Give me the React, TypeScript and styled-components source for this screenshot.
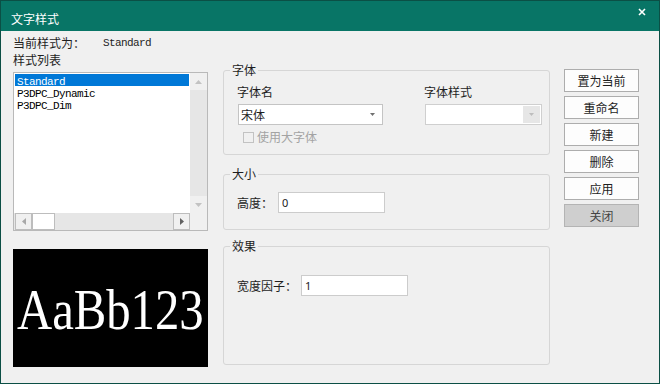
import React from "react";
import styled, { createGlobalStyle } from "styled-components";

const GlobalStyle = createGlobalStyle`
  html, body {
    margin: 0;
    padding: 0;
    background: #f0f0f0;
  }
  body {
    font-family: "Noto Sans CJK SC", "Noto Sans", sans-serif;
    font-size: 12px;
    color: #1e1e1e;
  }
  * { box-sizing: border-box; }
`;

const Window = styled.div`
  width: 660px;
  height: 384px;
  border: 1px solid #0b4f45;
  display: flex;
  flex-direction: column;
  background: #f0f0f0;
`;

const TitleBar = styled.div`
  height: 30px;
  flex: none;
  background: #087566;
  display: flex;
  justify-content: space-between;
  align-items: flex-start;
  padding: 0 13px 0 10px;
`;

const TitleText = styled.span`
  color: #fff;
  line-height: 12px;
  margin-top: 12px;
`;

const CloseIcon = styled.svg`
  margin-top: 7px;
`;

const Body = styled.div`
  flex: 1;
  display: flex;
  align-items: flex-start;
  padding-left: 12px;
`;

const LeftColumn = styled.div`
  width: 195px;
  padding-top: 6px;
  display: flex;
  flex-direction: column;
`;

const Line = styled.div<{ $gap?: number }>`
  display: flex;
  line-height: 12px;
  height: 12px;
  margin-top: ${(p) => p.$gap ?? 0}px;
`;

const InfoLabel = styled.span`
  width: 90px;
`;

const Mono = styled.span`
  font-family: "Liberation Mono", "DejaVu Sans Mono", monospace;
  font-size: 11px;
  letter-spacing: -0.6px;
`;

const ListBox = styled.div`
  margin-top: 6px;
  height: 159px;
  border: 1px solid #b9b9b9;
  background: #fff;
  display: grid;
  grid-template-columns: 1fr 17px;
  grid-template-rows: 1fr 17px;
`;

const ListArea = styled.div`
  padding: 1px;
`;

const ListItem = styled.div<{ $selected?: boolean }>`
  height: 12px;
  line-height: 12px;
  padding-left: 2px;
  background: ${(p) => (p.$selected ? "#0078d7" : "transparent")};
  color: ${(p) => (p.$selected ? "#fff" : "#000")};
`;

const VScroll = styled.div`
  background: #f0f0f0;
  display: grid;
  grid-template-rows: 17px 1fr 17px;
`;

const ScrollCell = styled.div<{ $track?: boolean }>`
  display: flex;
  align-items: center;
  justify-content: center;
  background: ${(p) => (p.$track ? "#e6e6e6" : "#f0f0f0")};
`;

const HScroll = styled.div`
  background: #e6e6e6;
  display: grid;
  grid-template-columns: 17px 23px 1fr 17px;
  padding-left: 1px;
`;

const HButton = styled.div<{ $thumb?: boolean }>`
  border: 1px solid #bdbdbd;
  background: ${(p) => (p.$thumb ? "#fff" : "#f0f0f0")};
  display: flex;
  align-items: center;
  justify-content: center;
`;

const Corner = styled.div`
  background: #f0f0f0;
`;

const Preview = styled.div`
  margin-top: 18px;
  height: 118px;
  background: #000;
  display: flex;
  align-items: center;
  justify-content: center;
  overflow: hidden;
`;

const PreviewText = styled.span`
  display: inline-block;
  color: #fff;
  font-family: "Liberation Serif", "DejaVu Serif", serif;
  font-size: 56px;
  line-height: 56px;
  transform: scaleX(0.87);
  margin-top: 4px;
`;

const MiddleColumn = styled.div`
  width: 327px;
  margin-left: 15px;
  padding-top: 39px;
  display: flex;
  flex-direction: column;
`;

const Group = styled.div<{ $gap?: number; $pb: number }>`
  border: 1px solid #d6d6d6;
  border-radius: 3px;
  padding: 0 14px ${(p) => p.$pb}px;
  margin-top: ${(p) => p.$gap ?? 0}px;
`;

const Caption = styled.div`
  width: fit-content;
  margin: -7px 0 0 -8px;
  padding: 0 2px;
  background: #f0f0f0;
  line-height: 12px;
  height: 12px;
`;

const FontGrid = styled.div`
  margin-top: 10px;
  display: grid;
  grid-template-columns: 145px 117px;
  column-gap: 42px;
  row-gap: 6px;
`;

const FieldLabel = styled.div`
  line-height: 12px;
  height: 12px;
  margin-left: -1px;
`;

const Combo = styled.div<{ $disabled?: boolean }>`
  height: 21px;
  border: 1px solid ${(p) => (p.$disabled ? "#cfcfcf" : "#c4c4c4")};
  background: #fff;
  display: flex;
  align-items: center;
  justify-content: space-between;
  padding: ${(p) => (p.$disabled ? "1px" : "0 7px 0 2px")};
`;

const DropButton = styled.div`
  width: 17px;
  height: 100%;
  background: #e6e6e6;
  display: flex;
  align-items: center;
  justify-content: center;
`;

const CheckRow = styled.div`
  margin-top: 6px;
  margin-left: 5px;
  display: flex;
  align-items: center;
  gap: 3px;
  color: #a3a3a3;
  line-height: 12px;
`;

const CheckBox = styled.span`
  width: 11px;
  height: 11px;
  border: 1px solid #c2c2c2;
`;

const FieldRow = styled.div<{ $gap: number; $labelGap: number }>`
  margin-top: ${(p) => p.$gap}px;
  display: flex;
  align-items: center;
  gap: ${(p) => p.$labelGap}px;
  margin-left: -1px;
`;

const TextBox = styled.input`
  width: 107px;
  height: 21px;
  border: 1px solid #cccccc;
  background: #fff;
  padding: 0 3px;
  font-family: "Noto Sans", "Liberation Sans", sans-serif;
  font-size: 11px;
  color: #222;
  outline: none;
`;

const RightColumn = styled.div`
  width: 75px;
  margin-left: 14px;
  padding-top: 38px;
  display: flex;
  flex-direction: column;
  gap: 4px;
`;

const Button = styled.button<{ $pressed?: boolean }>`
  height: 23px;
  border: 1px solid ${(p) => (p.$pressed ? "#b4b4b4" : "#adadad")};
  background: ${(p) => (p.$pressed ? "#cfcfcf" : "#fdfdfd")};
  color: ${(p) => (p.$pressed ? "#444" : "#1e1e1e")};
  font-family: inherit;
  font-size: 12px;
  padding: 0;
`;

const Tri = ({
  dir,
  color,
  size = 7,
}: {
  dir: "up" | "down" | "left" | "right";
  color: string;
  size?: number;
}) => {
  const h = Math.ceil(size / 2);
  const pts = {
    up: `0,${h} ${size},${h} ${size / 2},0`,
    down: `0,0 ${size},0 ${size / 2},${h}`,
    left: `${h},0 ${h},${size} 0,${size / 2}`,
    right: `0,0 0,${size} ${h},${size / 2}`,
  }[dir];
  const vertical = dir === "up" || dir === "down";
  const w = vertical ? size : h;
  const hh = vertical ? h : size;
  return (
    <svg width={w} height={hh} viewBox={`0 0 ${w} ${hh}`}>
      <polygon points={pts} fill={color} />
    </svg>
  );
};

const styles = ["Standard", "P3DPC_Dynamic", "P3DPC_Dim"];
const actions = ["置为当前", "重命名", "新建", "删除", "应用"];

export default function App() {
  return (
    <>
      <GlobalStyle />
      <Window>
        <TitleBar>
          <TitleText>文字样式</TitleText>
          <CloseIcon width="8" height="8" viewBox="0 0 8 8">
            <path d="M1 1 L7 7 M7 1 L1 7" stroke="#fff" strokeWidth="1.6" />
          </CloseIcon>
        </TitleBar>
        <Body>
          <LeftColumn>
            <Line>
              <InfoLabel>当前样式为：</InfoLabel>
              <Mono>Standard</Mono>
            </Line>
            <Line $gap={5}>样式列表</Line>
            <ListBox>
              <ListArea>
                {styles.map((s, i) => (
                  <ListItem key={s} $selected={i === 0}>
                    <Mono>{s}</Mono>
                  </ListItem>
                ))}
              </ListArea>
              <VScroll>
                <ScrollCell>
                  <Tri dir="up" color="#c2c2c2" />
                </ScrollCell>
                <ScrollCell $track />
                <ScrollCell>
                  <Tri dir="down" color="#c2c2c2" />
                </ScrollCell>
              </VScroll>
              <HScroll>
                <HButton>
                  <Tri dir="left" color="#a8a8a8" />
                </HButton>
                <HButton $thumb />
                <div />
                <HButton>
                  <Tri dir="right" color="#606060" />
                </HButton>
              </HScroll>
              <Corner />
            </ListBox>
            <Preview>
              <PreviewText>AaBb123</PreviewText>
            </Preview>
          </LeftColumn>

          <MiddleColumn>
            <Group $pb={11}>
              <Caption>字体</Caption>
              <FontGrid>
                <FieldLabel>字体名</FieldLabel>
                <FieldLabel>字体样式</FieldLabel>
                <Combo>
                  <span>宋体</span>
                  <Tri dir="down" color="#707070" size={5} />
                </Combo>
                <Combo $disabled>
                  <span />
                  <DropButton>
                    <Tri dir="down" color="#bdbdbd" size={5} />
                  </DropButton>
                </Combo>
              </FontGrid>
              <CheckRow>
                <CheckBox />
                使用大字体
              </CheckRow>
            </Group>

            <Group $gap={19} $pb={16}>
              <Caption>大小</Caption>
              <FieldRow $gap={12} $labelGap={5}>
                <span>高度：</span>
                <TextBox readOnly value="0" />
              </FieldRow>
            </Group>

            <Group $gap={16} $pb={68}>
              <Caption>效果</Caption>
              <FieldRow $gap={23} $labelGap={4}>
                <span>宽度因子：</span>
                <TextBox readOnly value="1" />
              </FieldRow>
            </Group>
          </MiddleColumn>

          <RightColumn>
            {actions.map((a) => (
              <Button key={a}>{a}</Button>
            ))}
            <Button $pressed>关闭</Button>
          </RightColumn>
        </Body>
      </Window>
    </>
  );
}
